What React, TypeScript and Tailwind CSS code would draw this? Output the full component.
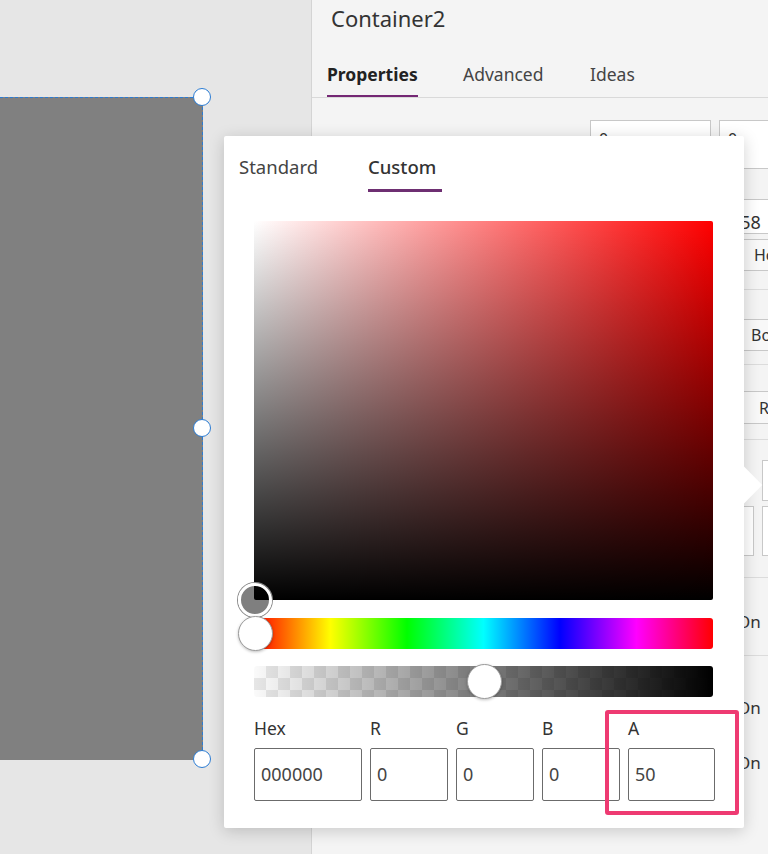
import React from 'react';

const Handle = ({ top }: { top: string }) => (
  <div className={`absolute left-[193px] ${top} h-[18px] w-[18px] rounded-full border-[1.5px] border-[#2b7cd3] bg-white`} />
);

const ColorPicker = () => {
  const fields = [
    { label: 'Hex', value: '000000' },
    { label: 'R', value: '0' },
    { label: 'G', value: '0' },
    { label: 'B', value: '0' },
    { label: 'A', value: '50' },
  ];

  return (
    <div className="absolute left-[224px] top-[136px] flex h-[692px] w-[520px] flex-col rounded-[2px] bg-white shadow-[0_3px_16px_rgba(0,0,0,0.18)]">
      {/* pointer */}
      <div className="absolute right-[-13px] top-[336px] h-[26px] w-[26px] rotate-45 bg-white" />

      <div className="flex pl-[15px] pt-[19px] text-[18.5px] leading-[24px]">
        <div className="w-[129px] text-[#444]">Standard</div>
        <div className="flex flex-col items-start">
          <span className="font-medium text-[#333]">Custom</span>
          <span className="mt-[10px] h-[3px] w-[74px] bg-[#6e2f72]" />
        </div>
      </div>

      <div className="px-[30px]">
        <div className="relative mt-[29px] h-[379px] w-[459px] rounded-[2px] bg-[linear-gradient(to_top,#000,rgba(0,0,0,0)),linear-gradient(to_right,#fff,#f00)]">
          <div className="absolute bottom-[-17px] left-[-16px] h-[34px] w-[34px] rounded-full border-[3px] border-white bg-black/50 ring-1 ring-[#8a8a8a]" />
        </div>

        <div className="relative mt-[18px] h-[31px] w-[459px] rounded-[3px] bg-[linear-gradient(to_right,#f00,#ff0,#0f0,#0ff,#00f,#f0f,#f00)]">
          <div className="absolute left-[-16px] top-[-2px] h-[35px] w-[35px] rounded-full border border-[#9a9a9a] bg-white shadow-[0_1px_3px_rgba(0,0,0,0.25)]" />
        </div>

        <div className="relative mt-[17px] h-[31px] w-[459px] rounded-[3px] bg-[conic-gradient(#e6e6e6_90deg,#fafafa_90deg_180deg,#e6e6e6_180deg_270deg,#fafafa_270deg)] bg-size-[24px_24px]">
          <div className="h-full w-full rounded-[3px] bg-[linear-gradient(to_right,rgba(0,0,0,0),#000)]" />
          <div className="absolute left-[213px] top-[-2px] h-[35px] w-[35px] rounded-full border border-[#9a9a9a] bg-white shadow-[0_1px_3px_rgba(0,0,0,0.25)]" />
        </div>

        <div className="mt-[20px] grid grid-cols-[108px_78px_78px_78px_87px] gap-x-[8px] text-[#333]">
          {fields.map((f) => (
            <div key={f.label} className="flex flex-col">
              <span className="text-[17.5px] leading-[22px]">{f.label}</span>
              <div className="mt-[9px] flex h-[53px] items-center rounded-[2px] border border-[#6b6b6b] pl-[6px] text-[18px] text-[#444]">
                {f.value}
              </div>
            </div>
          ))}
        </div>
      </div>

      {/* highlight around A */}
      <div className="absolute left-[381px] top-[574px] h-[105px] w-[134px] rounded-[3px] border-4 border-[#ee3a72]" />
    </div>
  );
};

const Divider = ({ mt }: { mt: string }) => <div className={`${mt} h-px w-full bg-[#dcdcdc]`} />;

export default function App() {
  return (
    <div className="relative flex h-[854px] w-[768px] overflow-hidden font-['Noto_Sans',sans-serif] text-[#333]">
      {/* canvas */}
      <div className="relative w-[311px] shrink-0 bg-[#e6e6e6]">
        <div className="absolute left-0 top-[97px] h-[663px] w-[203px] border-r border-t border-dashed border-[#2b7cd3] bg-[#808080]" />
        <Handle top="top-[88px]" />
        <Handle top="top-[419px]" />
        <Handle top="top-[750px]" />
      </div>

      {/* properties panel */}
      <div className="flex flex-1 flex-col border-l border-[#d4d4d4] bg-[#f4f4f4]">
        <div className="h-[48px] pl-[19px] pt-[4px] text-[22px] leading-[28px] text-[#333]">Container2</div>

        <div className="flex h-[50px] border-b border-[#d9d9d9] pl-[15px] text-[17.5px] leading-[24px]">
          <div className="flex w-[136px] flex-col items-start pt-[14px]">
            <span className="font-bold text-[#222]">Properties</span>
            <span className="mt-[9px] h-[3px] w-[91px] bg-[#742774]" />
          </div>
          <div className="w-[127px] pt-[14px] text-[#444]">Advanced</div>
          <div className="pt-[14px] text-[#444]">Ideas</div>
        </div>

        <div className="flex flex-col text-[16px]">
          <div className="mt-[22px] flex h-[49px] gap-[8px] pl-[278px]">
            <div className="w-[121px] border border-[#c8c8c8] bg-white pl-[8px] pt-[8px] leading-[20px]">0</div>
            <div className="w-[60px] border border-[#c8c8c8] bg-white pl-[8px] pt-[8px] leading-[20px]">0</div>
          </div>
          <div className="mt-[30px] flex h-[35px] pl-[407px]">
            <div className="w-[56px] overflow-hidden border border-[#c8c8c8] bg-white pl-[10px] pt-[10px] text-[18px] leading-[24px]">158</div>
          </div>
          <div className="mt-[5px] flex h-[32px] pl-[429px]">
            <div className="flex w-[34px] items-center overflow-hidden whitespace-nowrap border border-[#c8c8c8] bg-[#f8f8f8] pl-[12px]">Hor</div>
          </div>
          <Divider mt="mt-[18px]" />
          <div className="mt-[29px] flex h-[32px] pl-[429px]">
            <div className="flex w-[34px] items-center overflow-hidden whitespace-nowrap border border-[#c8c8c8] bg-[#f8f8f8] pl-[9px]">Bo</div>
          </div>
          <Divider mt="mt-[13px]" />
          <div className="mt-[26px] flex h-[33px] pl-[431px]">
            <div className="flex w-[30px] items-center overflow-hidden whitespace-nowrap border border-[#c8c8c8] bg-[#f8f8f8] pl-[15px]">R</div>
          </div>
          <Divider mt="mt-[15px]" />
          <div className="mt-[20px] flex h-[41px] pl-[450px]">
            <div className="w-[60px] border border-[#c8c8c8] bg-white" />
          </div>
          <div className="mt-[5px] flex h-[50px] gap-[8px] pl-[399px]">
            <div className="w-[43px] border border-[#c8c8c8] bg-white" />
            <div className="w-[60px] border border-[#c8c8c8] bg-white" />
          </div>
          <Divider mt="mt-[21px]" />
          <div className="mt-[32px] pl-[425px] text-[17px] leading-[24px]">On</div>
          <Divider mt="mt-[21px]" />
          <div className="mt-[40px] pl-[425px] text-[17px] leading-[24px]">On</div>
          <div className="mt-[31px] pl-[425px] text-[17px] leading-[24px]">On</div>
        </div>
      </div>

      <ColorPicker />
    </div>
  );
}
